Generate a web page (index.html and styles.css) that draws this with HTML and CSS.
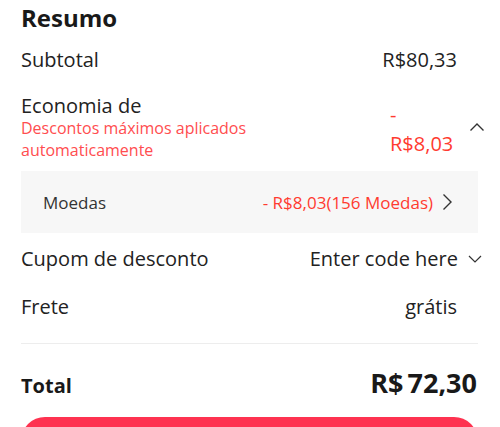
FILE: index.html
```html
<!DOCTYPE html>
<html lang="pt-BR">
<head>
<meta charset="utf-8">
<title>Resumo</title>
<link rel="stylesheet" href="styles.css">
</head>
<body>
<div class="summary">
  <h2 class="title">Resumo</h2>

  <div class="row row-subtotal">
    <span class="label">Subtotal</span>
    <span class="value">R$80,33</span>
  </div>

  <div class="row row-saving">
    <div class="saving-left">
      <div class="label saving-label">Economia de</div>
      <div class="saving-note">Descontos máximos aplicados automaticamente</div>
    </div>
    <div class="saving-right">
      <span class="saving-price">- R$8,03</span>
      <svg class="chev chev-up" width="16" height="10" viewBox="0 0 16 10"><polyline points="1.5,8.5 8,2 14.5,8.5" fill="none" stroke="#333" stroke-width="1.4"/></svg>
    </div>
  </div>

  <div class="coins">
    <span class="coins-label">Moedas</span>
    <span class="coins-right">
      <span class="coins-value">- R$8,03(156 Moedas)</span>
      <svg class="chev chev-right" width="12" height="18" viewBox="0 0 12 18"><polyline points="2.5,1.5 10,9 2.5,16.5" fill="none" stroke="#333" stroke-width="1.4"/></svg>
    </span>
  </div>

  <div class="row row-coupon">
    <span class="label">Cupom de desconto</span>
    <span class="coupon-right">
      <span class="value">Enter code here</span>
      <svg class="chev chev-down" width="14" height="8" viewBox="0 0 14 8"><polyline points="1,1 7,7 13,1" fill="none" stroke="#333" stroke-width="1.2"/></svg>
    </span>
  </div>

  <div class="row row-shipping">
    <span class="label">Frete</span>
    <span class="value">grátis</span>
  </div>

  <div class="divider"></div>

  <div class="row row-total">
    <span class="total-label">Total</span>
    <span class="total-value"><span class="cur">R$</span>72,30</span>
  </div>

  <div class="btn"></div>
</div>
</body>
</html>
```

FILE: styles.css
```css
html, body {
  margin: 0;
  padding: 0;
  background: #ffffff;
}

body {
  font-family: "Open Sans", "Noto Sans", sans-serif;
  color: #222222;
  overflow: hidden;
}

.summary {
  width: 457px;
  margin-left: 21px;
  display: flex;
  flex-direction: column;
}

.title {
  margin: 0;
  font-size: 24px;
  font-weight: 700;
  line-height: 36px;
  color: #191919;
}

.row {
  display: flex;
  justify-content: space-between;
  align-items: center;
}

.label,
.value {
  font-size: 20px;
  line-height: 28px;
}

.value {
  margin-right: 21px;
}

.row-subtotal {
  margin-top: 10px;
}

.row-saving {
  margin-top: 18px;
}

.saving-label {
  line-height: 23px;
  margin-top: 2px;
}

.saving-note {
  font-size: 16px;
  line-height: 22px;
  color: #ff4d4f;
  width: 250px;
}

.saving-right {
  display: flex;
  align-items: center;
}

.saving-price {
  width: 66px;
  font-size: 20px;
  line-height: 29px;
  color: #ff3b30;
  margin-right: 13px;
  margin-top: 4px;
}

.chev {
  display: block;
  flex: none;
}

.chev-up {
  margin-right: -7px;
}

.coins {
  margin-top: 10px;
  height: 62px;
  background: #f7f7f7;
  display: flex;
  align-items: center;
  justify-content: space-between;
  padding: 0 25px 0 22px;
}

.coins-label {
  font-size: 17px;
  color: #333333;
}

.coins-right {
  display: flex;
  align-items: center;
}

.coins-value {
  font-size: 17px;
  color: #ff3b30;
  margin-right: 8px;
}

.row-coupon {
  margin-top: 12px;
}

.coupon-right {
  display: flex;
  align-items: center;
}

.coupon-right .value {
  margin-right: 10px;
}

.chev-down {
  margin-right: -4px;
}

.row-shipping {
  margin-top: 20px;
}

.divider {
  margin-top: 22px;
  height: 1px;
  background: #ededed;
}

.row-total {
  margin-top: 21px;
  align-items: baseline;
}

.total-label {
  font-size: 20px;
  font-weight: 700;
  line-height: 36px;
  color: #191919;
}

.total-value {
  font-size: 27px;
  font-weight: 700;
  line-height: 36px;
  color: #191919;
  margin-right: 1px;
}

.cur {
  margin-right: 4px;
}

.btn {
  margin-top: 13px;
  height: 48px;
  border-radius: 24px;
  background: #fe3250;
}
```
